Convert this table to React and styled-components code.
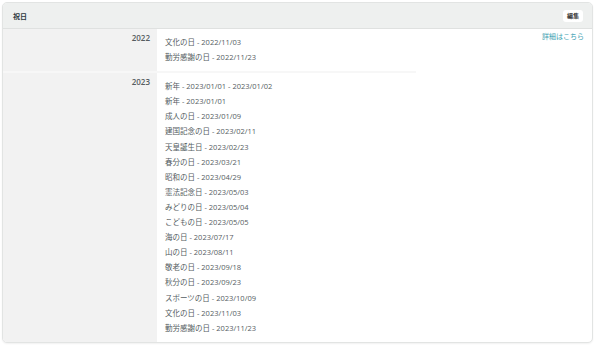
import React from "react";
import styled, { createGlobalStyle } from "styled-components";

const GlobalStyle = createGlobalStyle`
  html, body {
    margin: 0;
    padding: 0;
    background: #ffffff;
  }
  body {
    font-family: "Open Sans", "Noto Sans CJK JP", sans-serif;
  }
`;

const Page = styled.div`
  width: 600px;
  height: 346px;
  padding: 2px 7px 3px 2px;
  box-sizing: border-box;
`;

const Panel = styled.section`
  height: 100%;
  border: 1px solid #e2e4e3;
  border-radius: 5px;
  box-sizing: border-box;
  overflow: hidden;
  display: flex;
  flex-direction: column;
  background: #ffffff;
  box-shadow: 0 1px 2px rgba(0, 0, 0, 0.06);
`;

const Header = styled.header`
  height: 25px;
  flex: none;
  display: flex;
  align-items: center;
  justify-content: space-between;
  padding: 0 9px 0 10px;
  background: #eef0ef;
  border-bottom: 1px solid #dfe1e0;
`;

const Title = styled.h2`
  margin: 0;
  font-size: 7px;
  font-weight: 700;
  color: #2f3a3f;
`;

const EditButton = styled.button`
  border: none;
  background: #ffffff;
  border-radius: 3px;
  padding: 2px 4px;
  font-family: inherit;
  font-size: 6px;
  font-weight: 700;
  color: #333;
  line-height: 8px;
`;

const Body = styled.div`
  flex: 1;
  display: flex;
  align-items: flex-start;
  min-height: 0;
`;

const Table = styled.div`
  width: 413px;
  flex: none;
  display: flex;
  flex-direction: column;
  align-self: stretch;
`;

const Row = styled.div`
  display: grid;
  grid-template-columns: 154px 1fr;
  flex: ${(p) => (p.$fill ? 1 : "none")};
  border-top: ${(p) => (p.$first ? "none" : "2px solid #f7f7f7")};
`;

const Year = styled.div`
  background: #f2f2f2;
  text-align: right;
  padding: 4px 7px 0 0;
  font-size: 8px;
  font-weight: 600;
  color: #555c60;
  line-height: 10px;
`;

const List = styled.ul`
  list-style: none;
  margin: 0;
  padding: 6px 0 6px 8px;
`;

const Item = styled.li`
  font-size: 7.5px;
  line-height: 15.1px;
  color: #555d62;
  white-space: nowrap;
`;

const Aside = styled.div`
  flex: 1;
  display: flex;
  justify-content: flex-end;
  padding: 3px 8px 0 0;
`;

const MoreLink = styled.a`
  font-size: 7px;
  color: #3d9fb2;
  text-decoration: none;
  line-height: 10px;
`;

const holidays = [
  {
    year: "2022",
    items: ["文化の日 - 2022/11/03", "勤労感謝の日 - 2022/11/23"],
  },
  {
    year: "2023",
    items: [
      "新年 - 2023/01/01 - 2023/01/02",
      "新年 - 2023/01/01",
      "成人の日 - 2023/01/09",
      "建国記念の日 - 2023/02/11",
      "天皇誕生日 - 2023/02/23",
      "春分の日 - 2023/03/21",
      "昭和の日 - 2023/04/29",
      "憲法記念日 - 2023/05/03",
      "みどりの日 - 2023/05/04",
      "こどもの日 - 2023/05/05",
      "海の日 - 2023/07/17",
      "山の日 - 2023/08/11",
      "敬老の日 - 2023/09/18",
      "秋分の日 - 2023/09/23",
      "スポーツの日 - 2023/10/09",
      "文化の日 - 2023/11/03",
      "勤労感謝の日 - 2023/11/23",
    ],
  },
];

export default function App() {
  return (
    <Page>
      <GlobalStyle />
      <Panel>
        <Header>
          <Title>祝日</Title>
          <EditButton>編集</EditButton>
        </Header>
        <Body>
          <Table>
            {holidays.map((h, i) => (
              <Row key={h.year} $first={i === 0} $fill={i === holidays.length - 1}>
                <Year>{h.year}</Year>
                <List>
                  {h.items.map((it) => (
                    <Item key={it}>{it}</Item>
                  ))}
                </List>
              </Row>
            ))}
          </Table>
          <Aside>
            <MoreLink href="#">詳細はこちら</MoreLink>
          </Aside>
        </Body>
      </Panel>
    </Page>
  );
}
